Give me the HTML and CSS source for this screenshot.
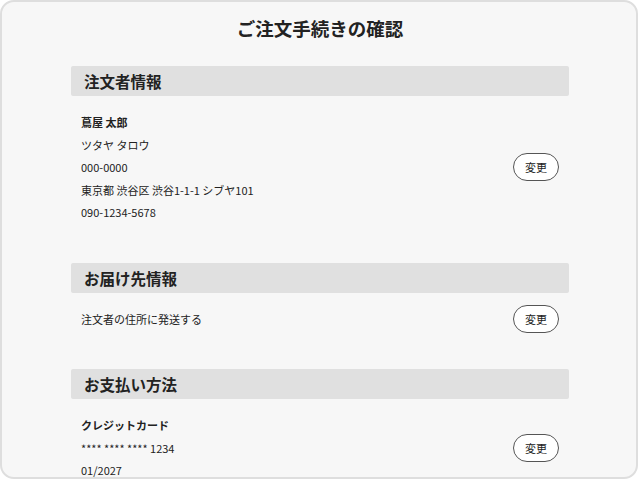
FILE: index.html
```html
<html lang="ja">
  <head>
    <meta charset="UTF-8" />
    <title>ご注文手続きの確認</title>
    <meta name="viewport" content="width=device-width,initial-scale=1" />
    <link rel="stylesheet" href="styles.css">
  </head>
  <body>
    <div class="frame">
      <h1 class="page-title">ご注文手続きの確認</h1>

      <section class="section">
        <h2 class="section-title">注文者情報</h2>
        <div class="section-body">
          <div class="lines">
            <p class="strong">蔦屋 太郎</p>
            <p>ツタヤ タロウ</p>
            <p>000-0000</p>
            <p>東京都 渋谷区 渋谷1-1-1 シブヤ101</p>
            <p>090-1234-5678</p>
          </div>
          <button class="change">変更</button>
        </div>
      </section>

      <section class="section">
        <h2 class="section-title">お届け先情報</h2>
        <div class="section-body">
          <div class="lines">
            <p>注文者の住所に発送する</p>
          </div>
          <button class="change">変更</button>
        </div>
      </section>

      <section class="section">
        <h2 class="section-title">お支払い方法</h2>
        <div class="section-body">
          <div class="lines">
            <p class="strong">クレジットカード</p>
            <p>**** **** **** 1234</p>
            <p>01/2027</p>
          </div>
          <button class="change">変更</button>
        </div>
      </section>
    </div>
  </body>
</html>
```

FILE: styles.css
```css
* {
  box-sizing: border-box;
  font-family: "Noto Sans CJK JP", "Noto Sans", sans-serif;
}
body {
  margin: 0;
  background: #fff;
  color: #222;
}
.frame {
  width: 638px;
  height: 479px;
  border: 2px solid #dedede;
  border-radius: 14px;
  background: #f7f7f7;
  overflow: hidden;
  padding: 0 67px 0 69px;
}
.page-title {
  margin: 0;
  padding-top: 12px;
  font-size: 18.5px;
  line-height: 28px;
  font-weight: bold;
  text-align: center;
  color: #222;
}
.section {
  margin-top: 24px;
}
.section-title {
  margin: 0;
  height: 30px;
  padding-left: 13px;
  background: #e0e0e0;
  border-radius: 2px;
  font-size: 15.5px;
  line-height: 30px;
  font-weight: bold;
  color: #222;
}
.section-body {
  display: flex;
  flex-direction: row;
  align-items: center;
  justify-content: space-between;
  padding: 12px 10px;
}
.lines {
  padding: 3px 0;
}
.lines p {
  margin: 0;
  font-size: 11px;
  line-height: 22.5px;
}
.lines p.strong {
  font-weight: bold;
}
.change {
  width: 46px;
  height: 28px;
  border: 1px solid #555;
  border-radius: 14px;
  background: #fff;
  font-size: 11px;
  color: #222;
  padding: 0;
  cursor: pointer;
}
```
